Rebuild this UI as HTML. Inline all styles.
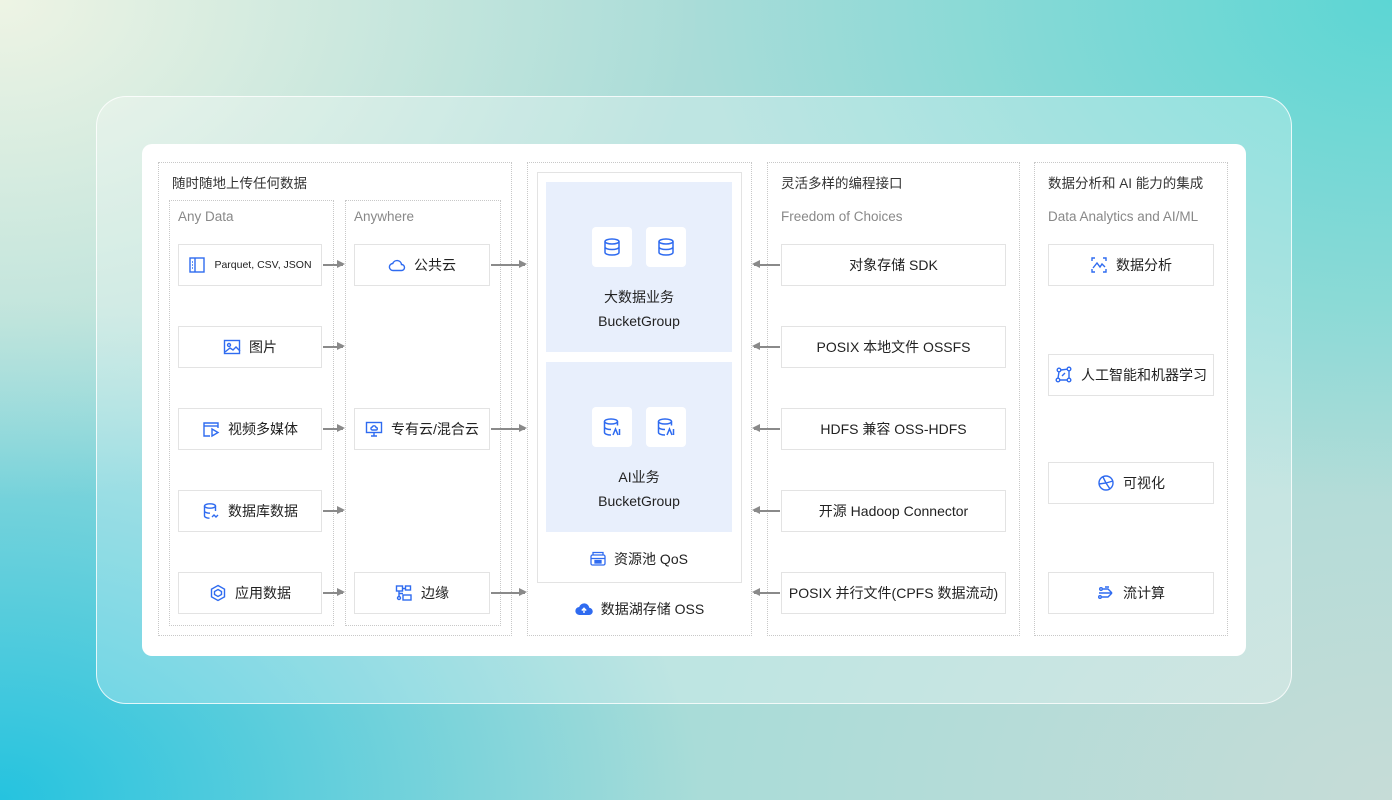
<!DOCTYPE html>
<html><head><meta charset="utf-8"><style>
*{margin:0;padding:0;box-sizing:border-box}
body{width:1392px;height:800px;overflow:hidden;position:relative;font-family:"Liberation Sans","Noto Sans CJK SC",sans-serif;color:#222;
background:
radial-gradient(ellipse 700px 500px at 0% 0%,#eef4e4 0%,rgba(238,244,228,0) 100%),
radial-gradient(ellipse 700px 500px at 0% 100%,#25c3df 0%,rgba(37,195,223,0) 100%),
radial-gradient(ellipse 700px 500px at 100% 0%,#5cd6d4 0%,rgba(92,214,212,0) 100%),
radial-gradient(ellipse 700px 500px at 100% 100%,#c6dcd7 0%,rgba(198,220,215,0) 100%),
#a9dcd8;}
.a{position:absolute}
.outer{left:96px;top:96px;width:1196px;height:608px;border:1.5px solid rgba(255,255,255,.8);border-radius:30px;background:rgba(255,255,255,.25)}
.card{left:142px;top:144px;width:1104px;height:512px;background:#fff;border-radius:10px}
.dash{border:1.5px dotted #c8c8c8}
.t{font-size:13.5px;color:#333}
.s{font-size:13.5px;color:#888}
.it{height:42px;border:1px solid #e3e3e3;background:#fff;display:flex;align-items:center;justify-content:center;gap:8px;font-size:14px;color:#222}
.it svg{width:18px;height:18px;flex:none}
.ar{height:1.5px;background:#8a8a8a}
.ar.r::after{content:"";position:absolute;right:-2px;top:-4px;border-left:8px solid #8a8a8a;border-top:4.5px solid transparent;border-bottom:4.5px solid transparent}
.ar.l::before{content:"";position:absolute;left:-2px;top:-4px;border-right:8px solid #8a8a8a;border-top:4.5px solid transparent;border-bottom:4.5px solid transparent}
.blk{background:#e8effc;text-align:center;font-size:14px;line-height:24px}
.ic{display:inline-flex;width:40px;height:40px;background:#fff;border-radius:4px;align-items:center;justify-content:center;margin:0 7px}
</style></head><body>
<div class="a outer"></div>
<div class="a card"></div>

<!-- group 1 -->
<div class="a dash" style="left:158px;top:162px;width:354px;height:474px"></div>
<div class="a t" style="left:172px;top:172px">随时随地上传任何数据</div>
<div class="a dash" style="left:169px;top:200px;width:165px;height:426px"></div>
<div class="a s" style="left:178px;top:209px">Any Data</div>
<div class="a dash" style="left:345px;top:200px;width:156px;height:426px"></div>
<div class="a s" style="left:354px;top:209px">Anywhere</div>

<div class="a it" style="left:178px;top:244px;width:144px;font-size:10.5px"><svg viewBox="0 0 18 18" fill="none" stroke="#2f6bf0" stroke-width="1.4"><rect x="2" y="2" width="14" height="14"/><line x1="7" y1="2" x2="7" y2="16"/><line x1="4" y1="6" x2="5" y2="6"/><line x1="4" y1="9" x2="5" y2="9"/><line x1="4" y1="12" x2="5" y2="12"/></svg>Parquet, CSV, JSON</div>
<div class="a it" style="left:178px;top:326px;width:144px"><svg viewBox="0 0 18 18" fill="none" stroke="#2f6bf0" stroke-width="1.4"><rect x="1.5" y="2.5" width="15" height="13"/><circle cx="6" cy="7" r="1.5"/><path d="M2 14l5-4 3 2 3-3 4 4"/></svg>图片</div>
<div class="a it" style="left:178px;top:408px;width:144px"><svg viewBox="0 0 18 18" fill="none" stroke="#2f6bf0" stroke-width="1.4"><path d="M16 8V3H2v13h6"/><line x1="2" y1="6" x2="16" y2="6"/><path d="M10 9l6 3.5-6 3.5z"/></svg>视频多媒体</div>
<div class="a it" style="left:178px;top:490px;width:144px"><svg viewBox="0 0 18 18" fill="none" stroke="#2f6bf0" stroke-width="1.4"><ellipse cx="8" cy="4" rx="5.5" ry="2.2"/><path d="M2.5 4v10c0 1.2 2.5 2.2 5 2.2M13.5 4v5M2.5 9c0 1.2 2.5 2.2 5.5 2.2"/><path d="M10 15l2-2 2 2 2-2"/></svg>数据库数据</div>
<div class="a it" style="left:178px;top:572px;width:144px"><svg viewBox="0 0 18 18" fill="none" stroke="#2f6bf0" stroke-width="1.4"><path d="M9 1.5l6.5 3.7v7.6L9 16.5l-6.5-3.7V5.2z"/><path d="M9 5.5l3.5 2v3L9 12.5l-3.5-2v-3z"/></svg>应用数据</div>

<div class="a it" style="left:354px;top:244px;width:136px"><svg viewBox="0 0 18 18" fill="none" stroke="#2f6bf0" stroke-width="1.4"><path d="M5 14.5h8.5a3 3 0 000-6 4.5 4.5 0 00-8.7-1A3.5 3.5 0 005 14.5z"/></svg>公共云</div>
<div class="a it" style="left:354px;top:408px;width:136px"><svg viewBox="0 0 18 18" fill="none" stroke="#2f6bf0" stroke-width="1.4"><rect x="1.5" y="2.5" width="15" height="10"/><path d="M6 16h6M9 12.5V16"/><path d="M7 10h4a1.3 1.3 0 000-2.6 2 2 0 00-3.8-.3A1.5 1.5 0 007 10z"/></svg>专有云/混合云</div>
<div class="a it" style="left:354px;top:572px;width:136px"><svg viewBox="0 0 18 18" fill="none" stroke="#2f6bf0" stroke-width="1.4"><rect x="1.5" y="2" width="6" height="5"/><rect x="10.5" y="2" width="5" height="4"/><rect x="8" y="11" width="8" height="5"/><circle cx="4" cy="14" r="1.5"/><path d="M4 7v5.5M7.5 4.5h3M4 9.5h4"/></svg>边缘</div>

<div class="a ar r" style="left:323px;top:264px;width:20px"></div>
<div class="a ar r" style="left:323px;top:346px;width:20px"></div>
<div class="a ar r" style="left:323px;top:428px;width:20px"></div>
<div class="a ar r" style="left:323px;top:510px;width:20px"></div>
<div class="a ar r" style="left:323px;top:592px;width:20px"></div>
<div class="a ar r" style="left:491px;top:264px;width:34px"></div>
<div class="a ar r" style="left:491px;top:428px;width:34px"></div>
<div class="a ar r" style="left:491px;top:592px;width:34px"></div>

<!-- center -->
<div class="a dash" style="left:527px;top:162px;width:225px;height:474px"></div>
<div class="a" style="left:537px;top:172px;width:205px;height:411px;border:1px solid #e3e3e3"></div>
<div class="a blk" style="left:546px;top:182px;width:186px;height:170px;padding-top:45px">
<div><span class="ic"><svg width="20" height="20" viewBox="0 0 20 20" fill="none" stroke="#2f6bf0" stroke-width="1.5"><ellipse cx="10" cy="4.5" rx="7" ry="2.5"/><path d="M3 4.5v11c0 1.4 3.1 2.5 7 2.5s7-1.1 7-2.5v-11M3 10c0 1.4 3.1 2.5 7 2.5s7-1.1 7-2.5"/></svg></span><span class="ic"><svg width="20" height="20" viewBox="0 0 20 20" fill="none" stroke="#2f6bf0" stroke-width="1.5"><ellipse cx="10" cy="4.5" rx="7" ry="2.5"/><path d="M3 4.5v11c0 1.4 3.1 2.5 7 2.5s7-1.1 7-2.5v-11M3 10c0 1.4 3.1 2.5 7 2.5s7-1.1 7-2.5"/></svg></span></div>
<div style="margin-top:18px">大数据业务</div><div>BucketGroup</div></div>
<div class="a blk" style="left:546px;top:362px;width:186px;height:170px;padding-top:45px">
<div><span class="ic"><svg width="20" height="20" viewBox="0 0 20 20" fill="none" stroke="#2f6bf0" stroke-width="1.5"><ellipse cx="9" cy="4.5" rx="6.5" ry="2.5"/><path d="M2.5 4.5v11c0 1.4 3 2.5 6.5 2.5M15.5 4.5v4M2.5 10c0 1.4 3 2.5 6.5 2.5M11 18l2.5-6 2.5 6M17.5 12v6"/></svg></span><span class="ic"><svg width="20" height="20" viewBox="0 0 20 20" fill="none" stroke="#2f6bf0" stroke-width="1.5"><ellipse cx="9" cy="4.5" rx="6.5" ry="2.5"/><path d="M2.5 4.5v11c0 1.4 3 2.5 6.5 2.5M15.5 4.5v4M2.5 10c0 1.4 3 2.5 6.5 2.5M11 18l2.5-6 2.5 6M17.5 12v6"/></svg></span></div>
<div style="margin-top:18px">AI业务</div><div>BucketGroup</div></div>
<div class="a" style="left:546px;top:549px;width:186px;display:flex;justify-content:center;align-items:center;gap:8px;font-size:14px"><svg width="16" height="16" viewBox="0 0 16 16" fill="none" stroke="#2f6bf0" stroke-width="1.3"><rect x="1" y="4" width="14" height="10" rx="1.5"/><path d="M3 4V1.5h10V4M1 7.5h14"/><rect x="5" y="9.5" width="6" height="2.5" fill="#2f6bf0"/></svg>资源池 QoS</div>
<div class="a" style="left:527px;top:599px;width:225px;display:flex;justify-content:center;align-items:center;gap:8px;font-size:14px"><svg width="18" height="16" viewBox="0 0 18 16"><path d="M4.5 14h9.5a3.6 3.6 0 00.3-7.2A5.2 5.2 0 004.2 6 4 4 0 004.5 14z" fill="#2f6bf0"/><path d="M9 12V7.5M6.8 9.5L9 7.3l2.2 2.2" stroke="#fff" stroke-width="1.4" fill="none"/></svg>数据湖存储 OSS</div>

<!-- group 4 -->
<div class="a dash" style="left:767px;top:162px;width:253px;height:474px"></div>
<div class="a t" style="left:781px;top:172px">灵活多样的编程接口</div>
<div class="a s" style="left:781px;top:209px">Freedom of Choices</div>
<div class="a it" style="left:781px;top:244px;width:225px">对象存储 SDK</div>
<div class="a it" style="left:781px;top:326px;width:225px">POSIX 本地文件 OSSFS</div>
<div class="a it" style="left:781px;top:408px;width:225px">HDFS 兼容 OSS-HDFS</div>
<div class="a it" style="left:781px;top:490px;width:225px">开源 Hadoop Connector</div>
<div class="a it" style="left:781px;top:572px;width:225px">POSIX 并行文件(CPFS 数据流动)</div>
<div class="a ar l" style="left:754px;top:264px;width:26px"></div>
<div class="a ar l" style="left:754px;top:346px;width:26px"></div>
<div class="a ar l" style="left:754px;top:428px;width:26px"></div>
<div class="a ar l" style="left:754px;top:510px;width:26px"></div>
<div class="a ar l" style="left:754px;top:592px;width:26px"></div>

<!-- group 5 -->
<div class="a dash" style="left:1034px;top:162px;width:194px;height:474px"></div>
<div class="a t" style="left:1048px;top:172px">数据分析和 AI 能力的集成</div>
<div class="a s" style="left:1048px;top:209px">Data Analytics and AI/ML</div>
<div class="a it" style="left:1048px;top:244px;width:166px"><svg viewBox="0 0 18 18" fill="none" stroke="#2f6bf0" stroke-width="1.4"><path d="M2 5V2h3M13 2h3v3M16 13v3h-3M5 16H2v-3"/><path d="M3 12l4-5 3 4 2-3 3 3"/></svg>数据分析</div>
<div class="a it" style="left:1048px;top:354px;width:166px"><svg viewBox="0 0 18 18" fill="none" stroke="#2f6bf0" stroke-width="1.4"><circle cx="4" cy="4" r="1.8"/><circle cx="14" cy="3" r="1.8"/><circle cx="3" cy="14" r="1.8"/><circle cx="14" cy="14" r="1.8"/><path d="M5.8 4l6.4-.8M4 5.8L3 12.2M4.8 14h7.4M14 4.8v7.4M7 10l3-3"/></svg>人工智能和机器学习</div>
<div class="a it" style="left:1048px;top:462px;width:166px"><svg viewBox="0 0 18 18" fill="none" stroke="#2f6bf0" stroke-width="1.4"><circle cx="9" cy="9" r="7"/><path d="M6 3l3 6-7 1M9 9l4 6M9 9l7-2"/></svg>可视化</div>
<div class="a it" style="left:1048px;top:572px;width:166px"><svg viewBox="0 0 18 18" fill="none" stroke="#2f6bf0" stroke-width="1.4"><circle cx="4" cy="5" r="1.3"/><circle cx="3" cy="13" r="1.3"/><path d="M6 5h5l4 4M2 9h13M5 13h6l4-4M8 3h4"/></svg>流计算</div>
</body></html>
